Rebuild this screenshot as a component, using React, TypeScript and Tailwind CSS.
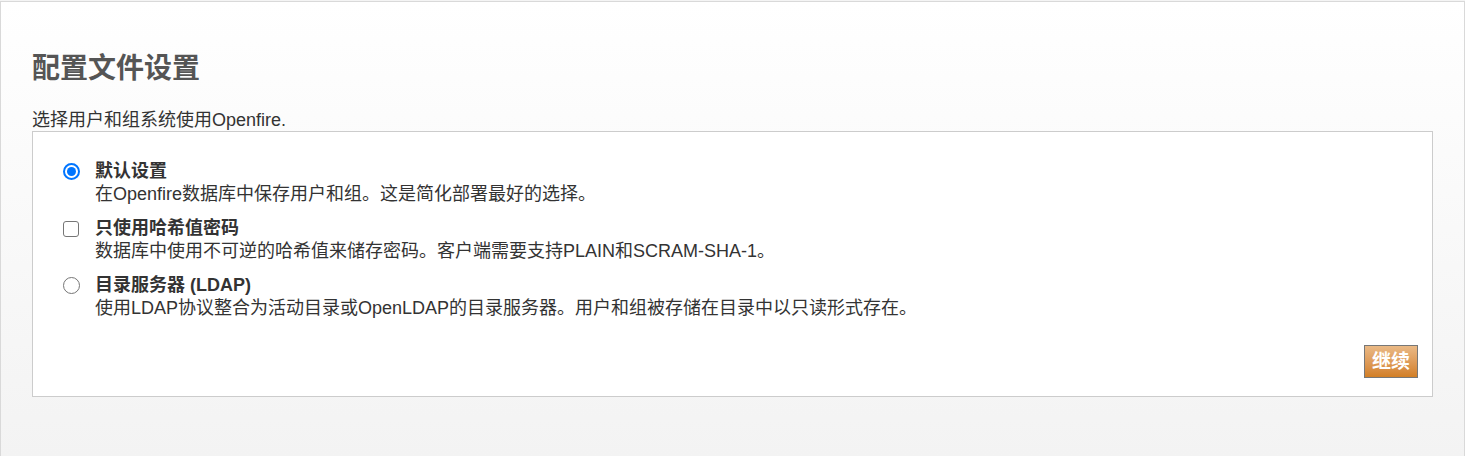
import React from "react";

const font = { fontFamily: '"Liberation Sans", "Noto Sans CJK SC", sans-serif' };

interface OptionProps {
  type: "radio" | "checkbox";
  checked?: boolean;
  label: string;
  desc: string;
}

const Option: React.FC<OptionProps> = ({ type, checked, label, desc }) => {
  return (
    <div className="flex items-start">
      <div className="w-[62px] h-[23px] flex items-center justify-end pr-[15px] shrink-0">
        {type === "radio" ? (
          checked ? (
            <span className="w-[17px] h-[17px] rounded-full border-2 border-[#0075ff] flex items-center justify-center">
              <span className="w-[9px] h-[9px] rounded-full bg-[#0075ff]" />
            </span>
          ) : (
            <span className="w-[17px] h-[17px] rounded-full border-[1.5px] border-[#767676] bg-white" />
          )
        ) : (
          <span className="mr-[1px] w-[16px] h-[16px] rounded-[3px] border-[1.5px] border-[#767676] bg-white" />
        )}
      </div>
      <div className="text-[18px] leading-[23px] text-[#333]">
        <div className="font-bold">{label}</div>
        <div>{desc}</div>
      </div>
    </div>
  );
};

export default function App() {
  return (
    <div className="h-screen overflow-hidden bg-[#f4f4f4]" style={font}>
      <div className="mt-px h-full border border-b-0 border-[#d9d9d9] bg-gradient-to-b from-white to-[#f3f3f3] px-[31px] pt-[50px]">
        <h1 className="text-[28px] leading-[34px] font-bold text-[#555]">配置文件设置</h1>
        <p className="mt-[24px] text-[18px] leading-[20px] text-[#333]">选择用户和组系统使用Openfire.</p>
        <div className="mt-[1px] border border-[#cccccc] bg-white pt-[28px] pb-[18px] pr-[14px]">
          <div className="flex flex-col gap-[11px]">
            <Option
              type="radio"
              checked
              label="默认设置"
              desc="在Openfire数据库中保存用户和组。这是简化部署最好的选择。"
            />
            <Option
              type="checkbox"
              label="只使用哈希值密码"
              desc="数据库中使用不可逆的哈希值来储存密码。客户端需要支持PLAIN和SCRAM-SHA-1。"
            />
            <Option
              type="radio"
              label="目录服务器 (LDAP)"
              desc="使用LDAP协议整合为活动目录或OpenLDAP的目录服务器。用户和组被存储在目录中以只读形式存在。"
            />
          </div>
          <div className="flex justify-end mt-[25px]">
            <button className="h-[33px] w-[54px] border border-[#777] bg-gradient-to-b from-[#eab985] to-[#d27f24] text-white font-bold text-[19px] leading-none">
              继续
            </button>
          </div>
        </div>
      </div>
    </div>
  );
}
